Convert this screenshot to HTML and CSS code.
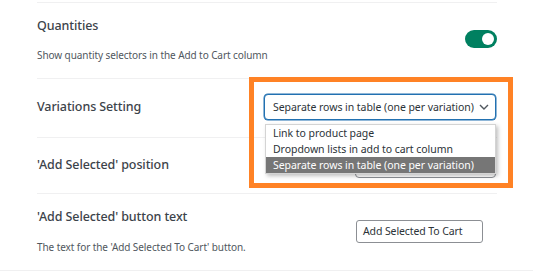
FILE: index.html
```html
<!DOCTYPE html>
<html>
<head>
<meta charset="utf-8">
<link rel="stylesheet" href="styles.css">
</head>
<body>
<div class="page">
  <div class="settings">
    <div class="row row-text">
      <div class="info">
        <h3 class="title">Quantities</h3>
        <p class="desc">Show quantity selectors in the Add to Cart column</p>
      </div>
      <span class="toggle"><span class="knob"></span></span>
    </div>
    <div class="row row-var">
      <h3 class="title">Variations Setting</h3>
      <div class="select select-wide focused">
        <span>Separate rows in table (one per variation)</span>
        <svg class="chev" width="10" height="6" viewBox="0 0 10 6"><path d="M1 1l4 4 4-4" fill="none" stroke="#50575e" stroke-width="1.4"/></svg>
      </div>
    </div>
    <div class="row row-pos">
      <h3 class="title">'Add Selected' position</h3>
      <div class="select select-small">
        <span></span>
        <svg class="chev" width="10" height="6" viewBox="0 0 10 6"><path d="M1 1l4 4 4-4" fill="none" stroke="#50575e" stroke-width="1.4"/></svg>
      </div>
    </div>
    <div class="row row-text row-last">
      <div class="info">
        <h3 class="title">'Add Selected' button text</h3>
        <p class="desc desc-last">The text for the 'Add Selected To Cart' button.</p>
      </div>
      <div class="input">Add Selected To Cart</div>
    </div>
  </div>
  <div class="section-end"></div>

  <div class="dropdown">
    <div class="opt">Link to product page</div>
    <div class="opt">Dropdown lists in add to cart column</div>
    <div class="opt opt-active">Separate rows in table (one per variation)</div>
  </div>
  <div class="highlight"></div>
</div>
</body>
</html>
```

FILE: styles.css
```css
* { box-sizing: border-box; }
html, body { margin: 0; padding: 0; background: #fff; }
body { font-family: "Noto Sans", "Open Sans", sans-serif; color: #3c434a; }
.page { position: relative; width: 533px; height: 276px; overflow: hidden; }
.settings {
  margin: 2px 0 0 37px;
  width: 460px;
  border-top: 1px solid #f0f0f1;
}
.row {
  display: flex;
  justify-content: space-between;
  align-items: center;
  border-bottom: 1px solid #f0f0f1;
}
.row-text { padding: 13px 0 15px; }
.row-var { padding: 15px 0 17px; }
.row-pos { padding: 14px 0 15px; }
.row-last { border-bottom: none; padding-bottom: 15px; }
.title {
  margin: 0;
  font-size: 12.5px;
  line-height: 20px;
  letter-spacing: -0.1px;
  font-weight: 500;
  color: #3c434a;
}
.desc {
  margin: 11px 0 0;
  font-size: 10px;
  line-height: 16px;
  letter-spacing: -0.08px;
  color: #50575e;
}
.desc-last { margin-top: 12px; }
.toggle {
  width: 32px;
  height: 18px;
  border-radius: 9px;
  background: #008060;
  display: flex;
  align-items: center;
  justify-content: flex-end;
  padding-right: 3px;
  margin-top: -2px;
}
.knob { width: 12px; height: 12px; border-radius: 50%; background: #fff; }
.select {
  height: 26px;
  border: 1px solid #8c8f94;
  border-radius: 4px;
  display: flex;
  align-items: center;
  justify-content: space-between;
  padding: 0 6px 0 8px;
  font-size: 10.5px;
  letter-spacing: -0.05px;
  color: #2c3338;
  background: #fff;
  margin-right: 1px;
  white-space: nowrap;
}
.select-wide { width: 232px; }
.select-small { width: 141px; }
.focused { border-color: #2271b1; box-shadow: 0 0 0 0.5px #2271b1; }
.chev { margin-left: 4px; flex: none; }
.input {
  width: 127px;
  height: 23px;
  border: 1px solid #8c8f94;
  border-radius: 3px;
  font-size: 10.5px;
  letter-spacing: -0.1px;
  line-height: 21px;
  padding-left: 6px;
  color: #2c3338;
  margin-right: 14px;
}
.section-end { border-top: 1px solid #f0f0f1; }
.dropdown {
  position: absolute;
  left: 265px;
  top: 124px;
  width: 231px;
  background: #fff;
  border: 1px solid #d4d4d4;
  box-shadow: 2px 2px 4px rgba(0,0,0,0.25);
}
.opt {
  height: 16px;
  line-height: 16px;
  padding-left: 7px;
  font-size: 10.5px;
  letter-spacing: -0.05px;
  color: #2c3338;
  white-space: nowrap;
}
.opt-active { background: #767676; color: #fff; }
.highlight {
  position: absolute;
  left: 249px;
  top: 77px;
  width: 264px;
  height: 111px;
  border: 5px solid #ff8225;
}
```
